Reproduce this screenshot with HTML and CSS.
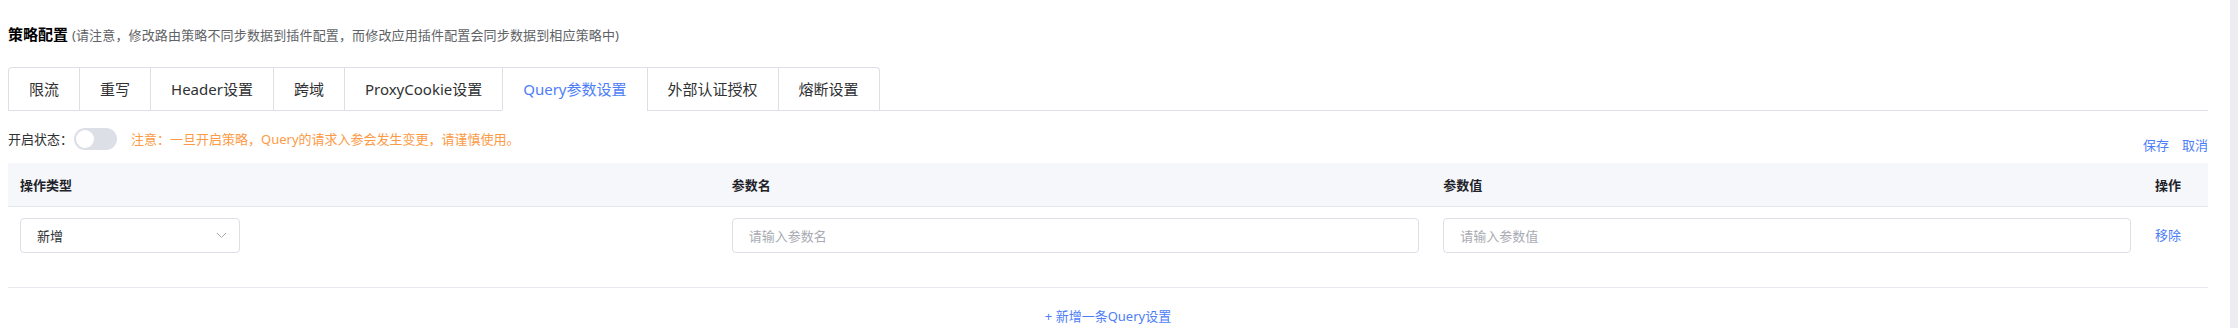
FILE: index.html
```html
<!DOCTYPE html>
<html lang="zh-CN">

<head>
    <meta charset="UTF-8">
    <meta name="viewport" content="width=device-width, initial-scale=1.0">
    <title>策略配置</title>
    <link rel="stylesheet" href="styles.css">
</head>

<body>

    <div class="page">
        <div class="content">
            <h3 class="section-title">策略配置 <span class="hint">(请注意，修改路由策略不同步数据到插件配置，而修改应用插件配置会同步数据到相应策略中)</span></h3>

            <!-- Tabs -->
            <div class="tabs">
                <div class="tab-list">
                    <div class="tab">限流</div>
                    <div class="tab">重写</div>
                    <div class="tab">Header设置</div>
                    <div class="tab">跨域</div>
                    <div class="tab">ProxyCookie设置</div>
                    <div class="tab active">Query参数设置</div>
                    <div class="tab">外部认证授权</div>
                    <div class="tab">熔断设置</div>
                </div>
            </div>

            <div class="status-row">
                <span class="status-label">开启状态：</span>
                <span class="switch"><span class="switch-knob"></span></span>
                <span class="warning">注意：一旦开启策略，Query的请求入参会发生变更，请谨慎使用。</span>
                <span class="actions">
                    <a class="link">保存</a>
                    <a class="link">取消</a>
                </span>
            </div>

            <!-- Table -->
            <div class="table">
                <div class="table-head">
                    <div class="cell">操作类型</div>
                    <div class="cell">参数名</div>
                    <div class="cell">参数值</div>
                    <div class="cell">操作</div>
                </div>
                <div class="table-row">
                    <div class="cell">
                        <div class="select">
                            <span>新增</span>
                            <svg class="select-arrow" width="11" height="7" viewBox="0 0 11 7">
                                <polyline points="1,1 5.5,5.5 10,1" fill="none" stroke="#a8abb2" stroke-width="1"/>
                            </svg>
                        </div>
                    </div>
                    <div class="cell"><input class="text-input" type="text" placeholder="请输入参数名"></div>
                    <div class="cell"><input class="text-input" type="text" placeholder="请输入参数值"></div>
                    <div class="cell"><a class="link row-link">移除</a></div>
                </div>
            </div>

            <div class="add-row">
                <a class="link">+ 新增一条Query设置</a>
            </div>
        </div>
        <div class="scroll-track"></div>
    </div>

</body>

</html>
```

FILE: styles.css
```css
* {
    margin: 0;
    padding: 0;
    box-sizing: border-box;
}

body {
    font-family: "Noto Sans", "Noto Sans CJK SC", sans-serif;
    background-color: #fff;
    color: #303133;
    font-size: 13px;
    overflow: hidden;
}

.page {
    display: flex;
    height: 100vh;
}

.content {
    flex: 1;
    padding: 24px 22px 0 8px;
}

.scroll-track {
    width: 8px;
    background-color: #ececf1;
}

/* Title */
.section-title {
    font-size: 15px;
    font-weight: 700;
    line-height: 20px;
    color: #000;
}

.section-title .hint {
    font-size: 13px;
    font-weight: 400;
    letter-spacing: 0.15px;
    color: #606266;
}

/* Tabs */
.tabs {
    margin-top: 22px;
    border-bottom: 1px solid #dcdfe6;
}

.tab-list {
    display: inline-flex;
    border: 1px solid #dcdfe6;
    border-bottom: none;
    border-radius: 4px 4px 0 0;
    margin-bottom: -1px;
}

.tab {
    height: 43px;
    line-height: 42px;
    padding: 0 20px;
    font-size: 15px;
    color: #303133;
    border-left: 1px solid #dcdfe6;
    border-bottom: 1px solid transparent;
}

.tab:first-child {
    border-left: none;
}

.tab.active {
    color: #4d7ef7;
    border-bottom-color: #fff;
}

/* Status row */
.status-row {
    display: flex;
    align-items: center;
    margin-top: 17px;
    height: 22px;
}

.status-label {
    color: #303133;
    line-height: 18px;
}

.switch {
    position: relative;
    width: 43px;
    height: 22px;
    border-radius: 11px;
    background-color: #dcdfe6;
    margin-left: 1px;
}

.switch-knob {
    position: absolute;
    top: 2px;
    left: 2px;
    width: 18px;
    height: 18px;
    border-radius: 50%;
    background-color: #fff;
}

.warning {
    margin-left: 14px;
    color: #fd9a45;
    line-height: 18px;
}

.actions {
    margin-left: auto;
    margin-top: 12px;
    display: flex;
    gap: 13px;
    line-height: 18px;
}

.link {
    color: #4d7ef7;
    cursor: pointer;
}

/* Table */
.table {
    margin-top: 13px;
}

.table-head,
.table-row {
    display: grid;
    grid-template-columns: 1fr 1fr 1fr 65px;
}

.table-head {
    height: 44px;
    background-color: #f5f7fa;
    border-bottom: 1px solid #e4e7ed;
    align-items: center;
}

.table-head .cell {
    font-weight: 700;
    color: #1f2329;
    line-height: 18px;
}

.cell {
    padding: 0 12px;
}

.table-row {
    border-bottom: 1px solid #e6e8ef;
}

.table-row .cell {
    padding-top: 11px;
    padding-bottom: 34px;
}

.select {
    width: 220px;
    height: 35px;
    border: 1px solid #dcdfe6;
    border-radius: 4px;
    padding: 0 12px 0 16px;
    display: flex;
    align-items: center;
    justify-content: space-between;
    color: #303133;
}

.text-input {
    width: 100%;
    height: 35px;
    border: 1px solid #dcdfe6;
    border-radius: 4px;
    padding: 0 16px;
    font-family: inherit;
    font-size: 13px;
    color: #303133;
    outline: none;
}

.text-input::placeholder {
    color: #a8abb2;
}

.row-link {
    display: block;
    line-height: 35px;
}

/* Add button */
.add-row {
    padding-top: 18px;
    text-align: center;
    line-height: 20px;
}
```
